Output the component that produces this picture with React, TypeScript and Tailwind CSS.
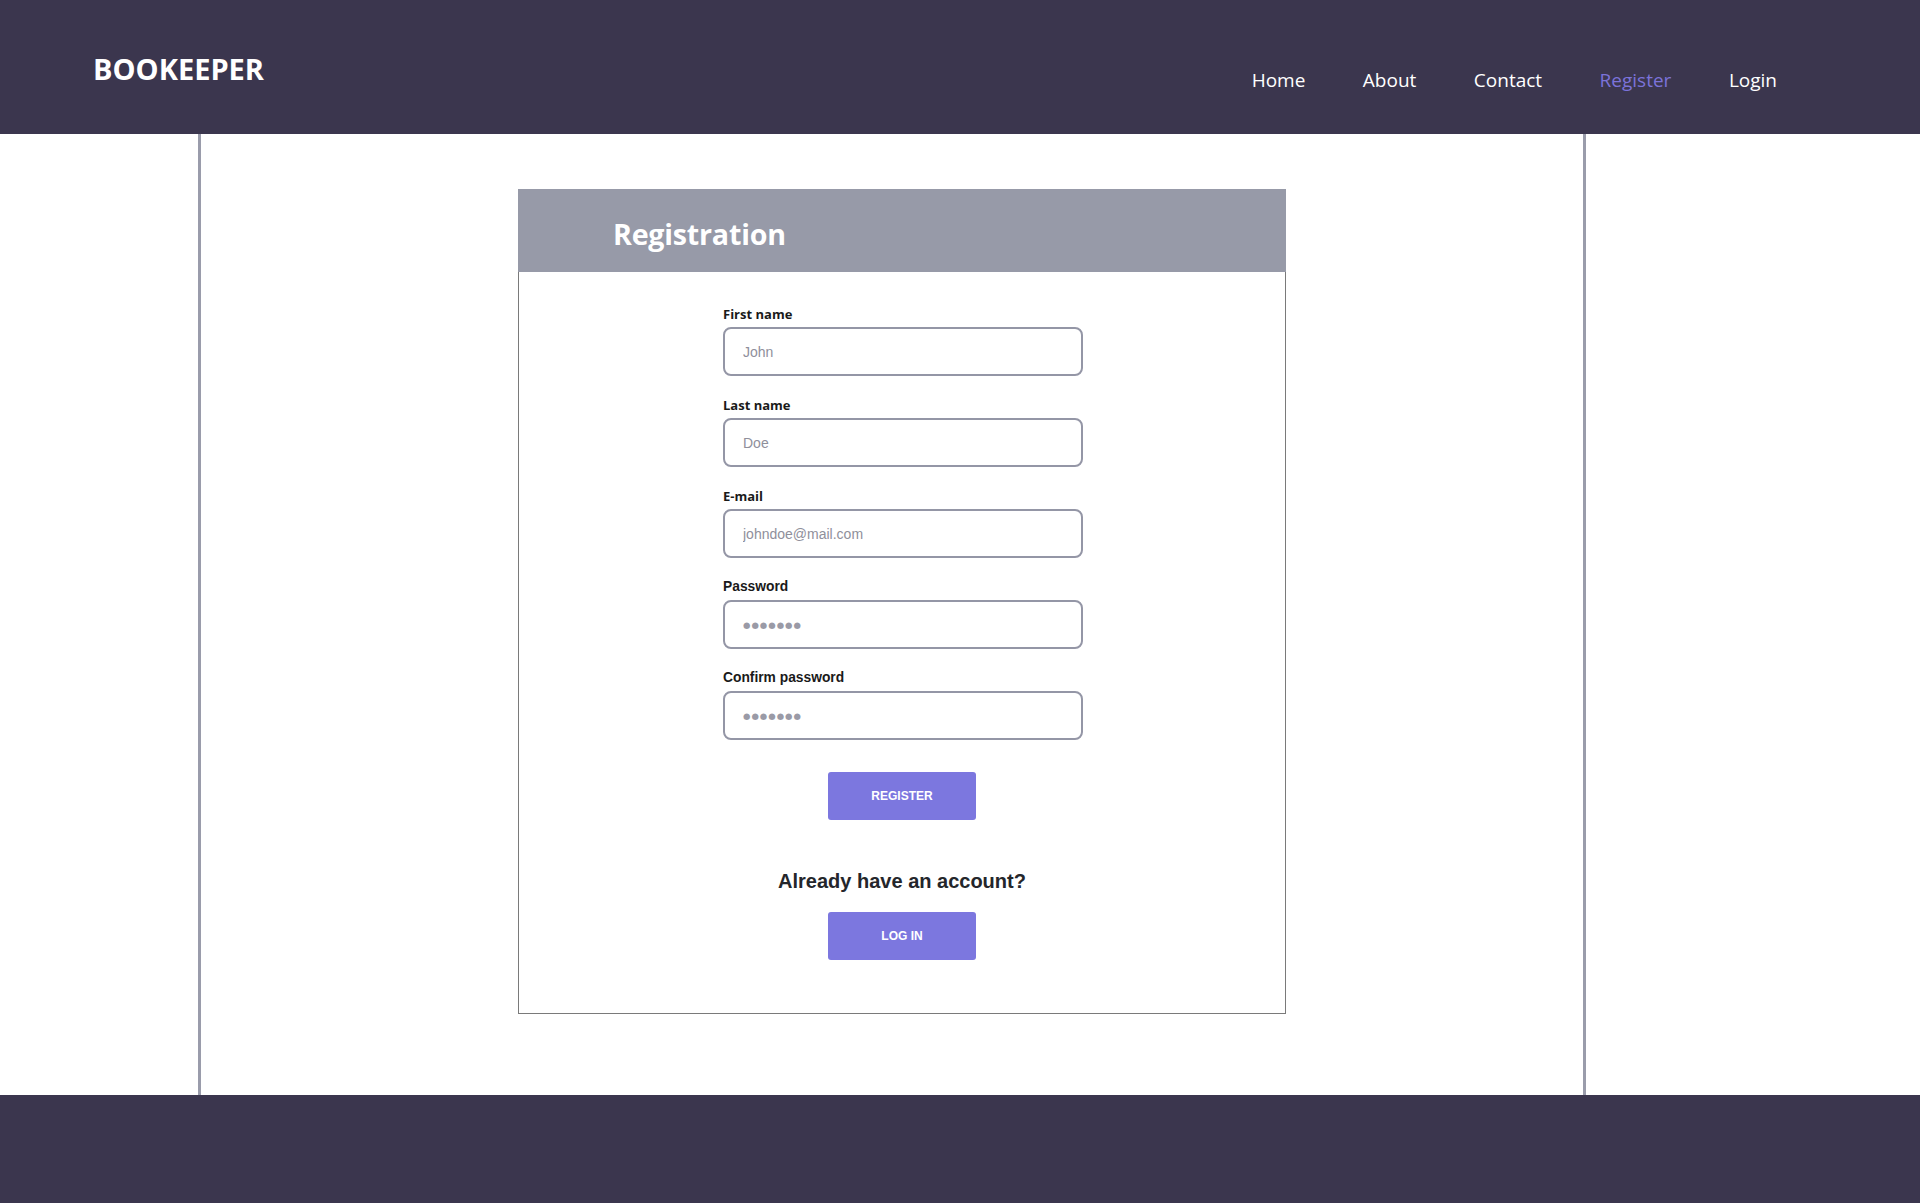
import React from "react";

const fields = [
  { label: "First name", placeholder: "John", font: "open" },
  { label: "Last name", placeholder: "Doe", font: "open" },
  { label: "E-mail", placeholder: "johndoe@mail.com", font: "open" },
  { label: "Password", placeholder: "●●●●●●●", font: "arial" },
  { label: "Confirm password", placeholder: "●●●●●●●", font: "arial" },
];

export default function App() {
  return (
    <div className="flex min-h-screen flex-col bg-white">
      <header className="flex h-[134px] shrink-0 items-start justify-between bg-[#3b364e]">
        <div className="pl-[93px] pt-[50px] font-['Open_Sans',sans-serif] text-[29px] font-bold leading-[38px] text-white">
          BOOKEEPER
        </div>
        <nav className="flex gap-[57.5px] pr-[143px] pt-[66px] font-['Open_Sans',sans-serif] text-[19px] leading-[28px] text-white">
          <a>Home</a>
          <a>About</a>
          <a>Contact</a>
          <a className="text-[#7b73d9]">Register</a>
          <a>Login</a>
        </nav>
      </header>

      <main className="flex flex-1 pl-[198px] pr-[334px]">
        <div className="flex-1 border-x-[3px] border-[#9a9cab] pb-[81px] pt-[55px]">
          <div className="ml-[317px] w-[768px]">
            <div className="flex h-[83px] items-center bg-[#979aa8] pl-[95px] pt-[8px]">
              <h1 className="font-['Open_Sans',sans-serif] text-[28.6px] font-bold leading-none tracking-[-0.2px] text-white">
                Registration
              </h1>
            </div>
            <div className="flex flex-col items-center border-x border-b border-[#7a7a7a] pb-[53px] pt-[34px]">
              <div className="ml-[2px] flex w-[360px] flex-col gap-[21px]">
                {fields.map((f) => (
                  <div key={f.label} className="flex flex-col gap-[5px]">
                    <label
                      className={
                        f.font === "open"
                          ? "font-['Open_Sans',sans-serif] text-[13px] font-bold leading-[16px] text-[#1a1a1a]"
                          : "font-['Liberation_Sans',Arial,sans-serif] text-[13.8px] font-bold leading-[16px] text-[#1a1a1a]"
                      }
                    >
                      {f.label}
                    </label>
                    <input
                      readOnly
                      placeholder={f.placeholder}
                      className={
                        f.font === "open"
                          ? "h-[49px] rounded-[8px] border-2 border-[#9496a6] px-[18px] font-['Liberation_Sans',Arial,sans-serif] text-[14px] outline-none placeholder:text-[#8f8f9b]"
                          : "h-[49px] rounded-[8px] border-2 border-[#9496a6] px-[18px] font-['DejaVu_Sans',sans-serif] text-[8.5px] tracking-[1px] outline-none placeholder:text-[#9a9aa6]"
                      }
                    />
                  </div>
                ))}
              </div>
              <button className="mt-[32px] h-[48px] w-[148px] rounded-[3px] bg-[#7c77df] font-['Liberation_Sans',Arial,sans-serif] text-[12px] font-bold text-white">
                REGISTER
              </button>
              <p className="mt-[49px] font-['Liberation_Sans',Arial,sans-serif] text-[20px] font-bold leading-[24px] text-[#24262b]">
                Already have an account?
              </p>
              <button className="mt-[19px] h-[48px] w-[148px] rounded-[3px] bg-[#7c77df] font-['Liberation_Sans',Arial,sans-serif] text-[12px] font-bold text-white">
                LOG IN
              </button>
            </div>
          </div>
        </div>
      </main>

      <footer className="h-[108px] shrink-0 bg-[#3b364e]" />
    </div>
  );
}
